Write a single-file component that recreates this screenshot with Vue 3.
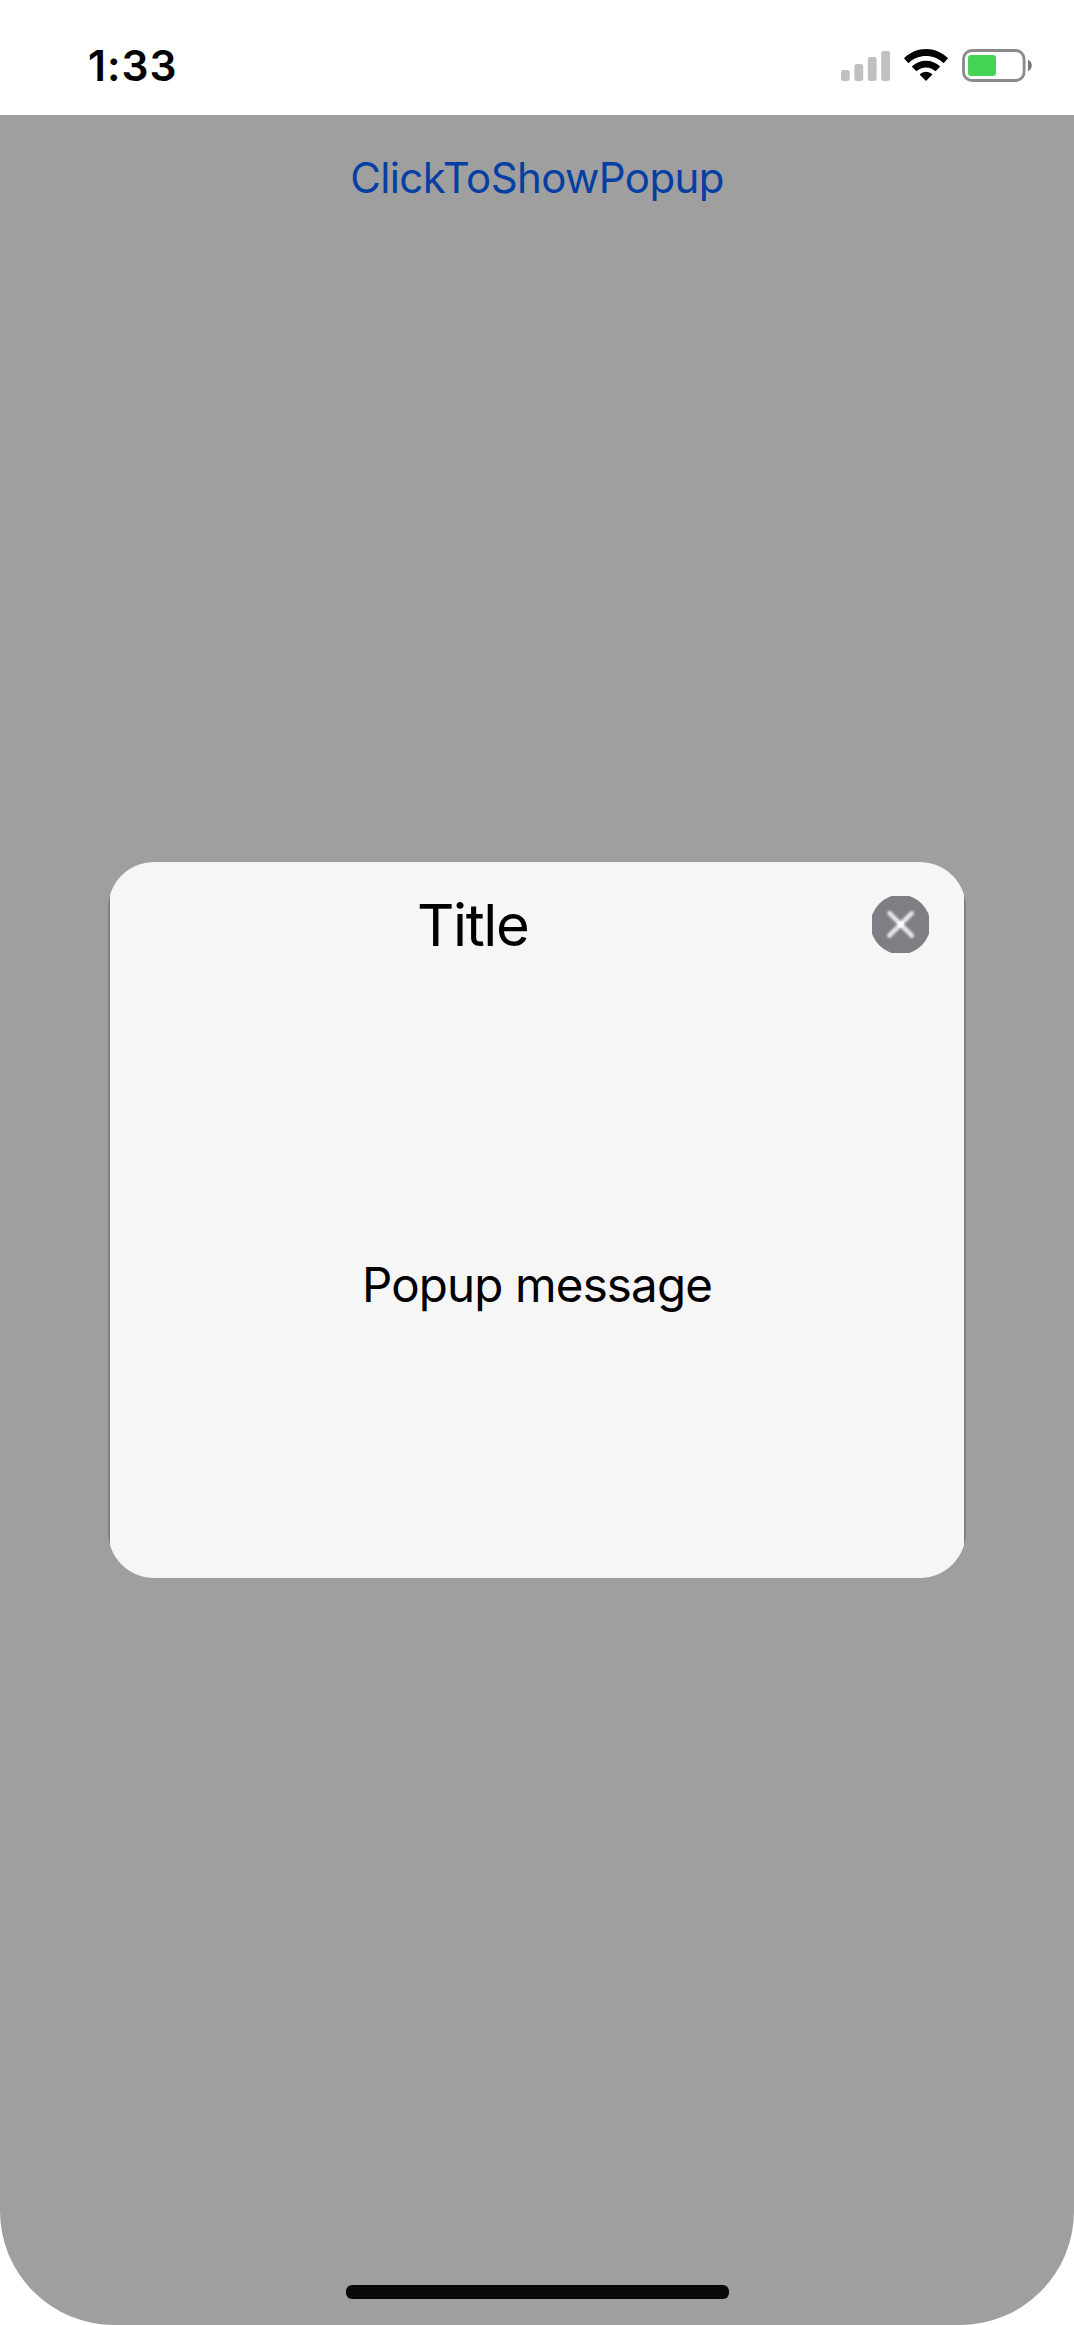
<script setup>
const bars = [
  { x: 0, h: 11 },
  { x: 13.4, h: 17 },
  { x: 26.8, h: 24 },
  { x: 40.2, h: 30 },
]
</script>

<template>
  <div class="phone">
    <header class="status">
      <span class="clock">1:33</span>
      <div class="indicators">
        <svg class="signal" width="49" height="30" viewBox="0 0 49 30">
          <rect v-for="b in bars" :key="b.x" :x="b.x" :y="30 - b.h" width="8.8" :height="b.h" rx="2.2" fill="#c0c0c0" />
        </svg>
        <svg class="wifi" width="44" height="32" viewBox="0 0 44 32">
          <path d="M0 9.3C12.3-3.1 31.7-3.1 44 9.3L39.6 14.2C29.8 4.6 14.2 4.6 4.4 14.2Z" />
          <path d="M7.8 17.6C15.8 9.9 28.2 9.9 36.2 17.6L31.6 22.3C26.2 17.2 17.8 17.2 12.4 22.3Z" />
          <path d="M15.6 25.5C19.2 21.9 24.8 21.9 28.4 25.5L22 32Z" />
        </svg>
        <svg class="battery" width="72" height="33" viewBox="0 0 72 33">
          <rect x="1.5" y="1.5" width="60.6" height="30" rx="8.5" fill="none" stroke="#8a8a8a" stroke-width="2.8" />
          <rect x="6" y="6" width="28" height="21" rx="3" fill="#45d453" />
          <path d="M66 10.8C71 12.8 71 20.2 66 22.2Z" fill="#777" />
        </svg>
      </div>
    </header>
    <main class="screen">
      <button class="trigger">ClickToShowPopup</button>
      <section class="popup">
        <div class="panel">
          <div class="head">
            <h1 class="title">Title</h1>
            <button class="close" aria-label="Close">
              <svg width="57" height="57" viewBox="0 0 57 57">
                <circle cx="28.5" cy="28.5" r="29.8" fill="#7f7e85" />
                <path d="M17.5 17.2L39.8 39.5M39.8 17.2L17.5 39.5" class="cross" />
                <rect x="25.7" y="25.4" width="6" height="6" fill="#fafafa" />
              </svg>
            </button>
          </div>
          <p class="message">Popup message</p>
        </div>
      </section>
      <div class="home"></div>
    </main>
  </div>
</template>

<style>
body {
  margin: 0;
  background: #fff;
}
</style>

<style scoped>
.phone {
  width: 1074px;
  height: 2325px;
  overflow: hidden;
  display: flex;
  flex-direction: column;
  background: #fff;
  font-family: Inter, "Liberation Sans", sans-serif;
  color: #000;
}
.status {
  height: 115px;
  flex: none;
  display: flex;
  justify-content: space-between;
  box-sizing: border-box;
  padding: 0 40px 0 88px;
}
.clock {
  margin-top: 41px;
  height: 50px;
  font-size: 42.5px;
  line-height: 50px;
  font-weight: 600;
  letter-spacing: 1px;
}
.indicators {
  display: flex;
  align-items: flex-start;
  padding-top: 49px;
}
.signal {
  margin-top: 2px;
}
.wifi {
  margin-left: 14px;
}
.battery {
  margin-left: 14px;
}
.screen {
  flex: 1;
  display: flex;
  flex-direction: column;
  align-items: center;
  background: #9f9f9f;
  border-radius: 0 0 114px 114px;
}
button {
  padding: 0;
  border: 0;
  background: none;
  font-family: inherit;
}
.trigger {
  margin-top: 38px;
  height: 50px;
  line-height: 50px;
  font-size: 42px;
  letter-spacing: -0.6px;
  color: #053fa3;
  white-space: nowrap;
}
.popup {
  margin-top: 659px;
  width: 858px;
  height: 715.5px;
  box-sizing: border-box;
  padding: 0 2px;
  border-radius: 46px;
  overflow: hidden;
  background: #808080;
}
.panel {
  height: 100%;
  background: #f6f6f6;
}
.head {
  display: flex;
  justify-content: space-between;
  padding: 34px 35px 0 307px;
  height: 57px;
}
.title {
  margin: -6px 0 0;
  height: 70px;
  font-size: 58px;
  line-height: 70px;
  font-weight: 400;
  letter-spacing: -1.4px;
}
.close {
  width: 57px;
  height: 57px;
}
.close svg {
  display: block;
  overflow: hidden;
}
.cross {
  stroke: #e6e6e8;
  stroke-width: 4.6;
  stroke-linecap: round;
  filter: blur(1px);
}
.message {
  margin: 302px 0 0;
  font-size: 47.5px;
  line-height: 60px;
  letter-spacing: -0.85px;
  text-align: center;
}
.home {
  width: 383px;
  height: 14px;
  margin-top: auto;
  margin-bottom: 26px;
  border-radius: 6px;
  background: #0a0a0a;
}
</style>
